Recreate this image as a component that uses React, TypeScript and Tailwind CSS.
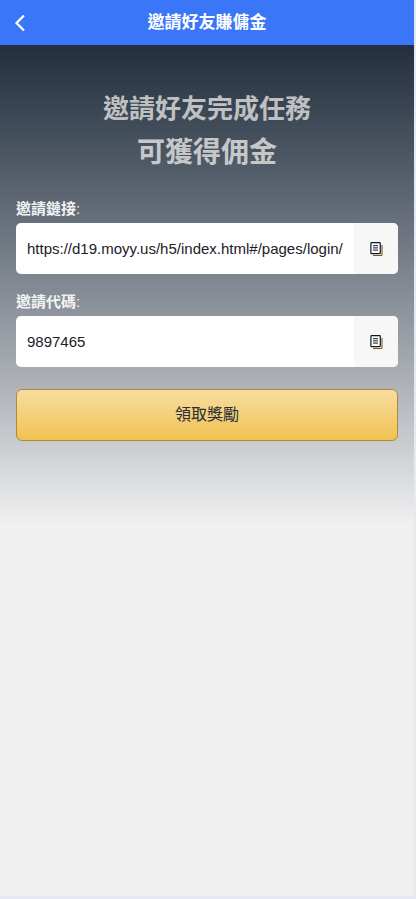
import React from "react";

function CopyIcon() {
  return (
    <svg width="13" height="14" viewBox="0 0 13 14" fill="none" className="block">
      <path d="M12 3v9.6a.9.9 0 0 1-.9.9H3" stroke="#7a5a1c" strokeWidth="1.1" />
      <rect x="0.9" y="0.7" width="9.4" height="11" rx="0.8" fill="#fff" stroke="#111827" strokeWidth="1.2" />
      <path d="M3 3.7h5M3 5.9h5M3 8.1h5" stroke="#111827" strokeWidth="1" />
    </svg>
  );
}

function Field({ label, value, mt }: { label: string; value: string; mt: string }) {
  return (
    <div className={mt}>
      <div className="text-[15px] leading-[20px] font-bold text-[#f1f2f4]">
        {label}
        <span className="font-normal">:</span>
      </div>
      <div className="mt-[4px] flex h-[51px] overflow-hidden rounded-[5px] bg-white">
        <div className="flex min-w-0 flex-1 items-center overflow-hidden whitespace-nowrap pl-[11px] pt-[2px] text-[15px] text-[#1b2027]">
          {value}
        </div>
        <button className="flex h-full w-[44px] shrink-0 items-center justify-center bg-[#f7f7f7]">
          <CopyIcon />
        </button>
      </div>
    </div>
  );
}

export default function App() {
  return (
    <div className="h-[899px] w-[416px] overflow-hidden bg-[#e6e9f2] font-['Liberation_Sans','Noto_Sans_CJK_TC',sans-serif]">
      <div className="h-[896px] w-[414px] bg-[#f0f0f0]">
        <header className="relative flex h-[45px] items-center justify-center bg-[#3a76f8]">
          <button className="absolute left-[14px] top-[14px]">
            <svg width="12" height="18" viewBox="0 0 12 18" fill="none" className="block">
              <path d="M10 1.5 2.5 9l7.5 7.5" stroke="#fff" strokeWidth="2.2" />
            </svg>
          </button>
          <h1 className="text-[17px] font-bold text-white">邀請好友賺傭金</h1>
        </header>
        <main className="h-[480px] bg-gradient-to-b from-[#232f3e] to-[#f0f0f0] px-[16px] pt-[42px]">
          <div className="text-center font-bold leading-[44px]">
            <div className="text-[26px] text-[#bfc0c2]">邀請好友完成任務</div>
            <div className="text-[28px] text-[#c6c7c9]">可獲得佣金</div>
          </div>
          <Field label="邀請鏈接" value="https://d19.moyy.us/h5/index.html#/pages/login/" mt="mt-[24px]" />
          <Field label="邀請代碼" value="9897465" mt="mt-[18px]" />
          <button className="mt-[22px] flex h-[52px] w-full items-center justify-center rounded-[6px] border border-[#ad8a3c] bg-gradient-to-b from-[#f7dd9e] to-[#f0c250] text-[16px] text-[#2a2f36]">
            領取獎勵
          </button>
        </main>
      </div>
    </div>
  );
}
